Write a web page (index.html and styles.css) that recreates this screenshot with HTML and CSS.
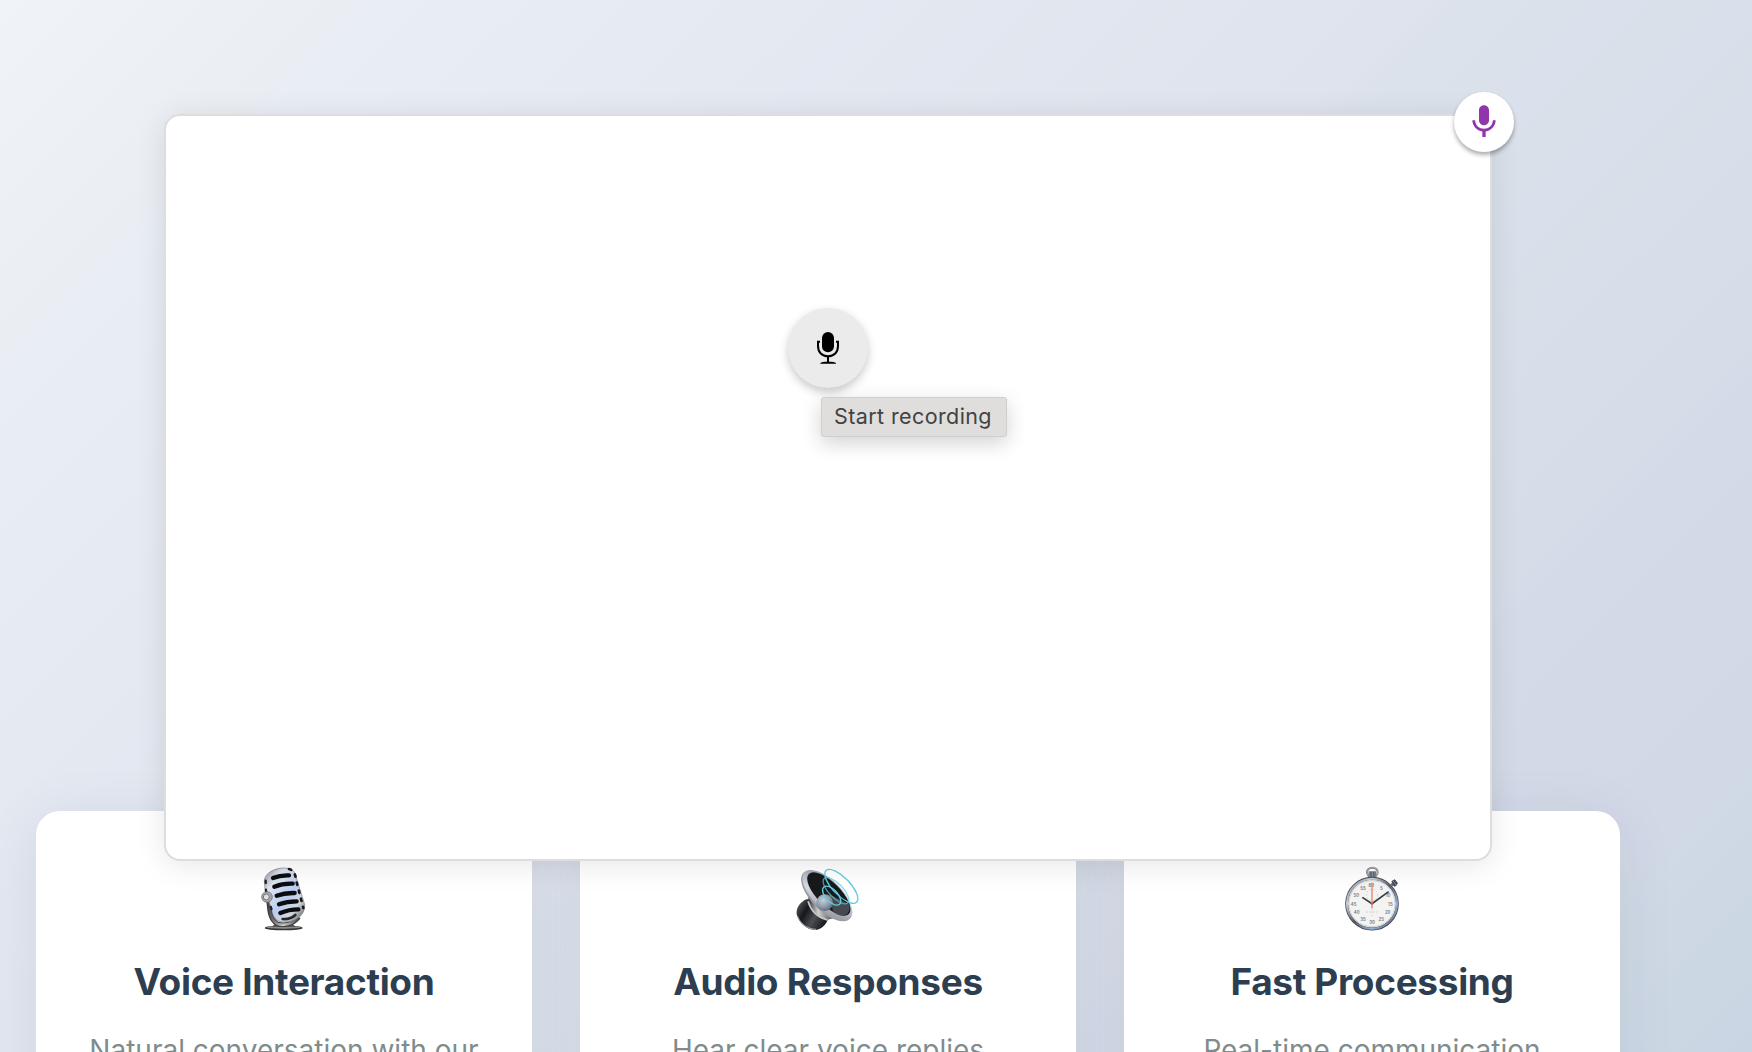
FILE: index.html
```
<!DOCTYPE html>
<html lang="en">
<head>
<meta charset="utf-8">
<title>Voice Assistant</title>
<link rel="stylesheet" href="styles.css">
</head>
<body>
<main class="features">
  <article class="card">
    <svg class="card-icon" viewBox="-3 3 270 270" aria-hidden="true">
      <defs>
        <linearGradient id="chrome" x1="0" y1="0" x2="1" y2="1">
          <stop offset="0" stop-color="#8e8e92"/><stop offset=".25" stop-color="#dfe5f0"/><stop offset=".55" stop-color="#b9cdf0"/><stop offset=".75" stop-color="#d4d8e0"/><stop offset="1" stop-color="#4e4c4c"/>
        </linearGradient>
        <linearGradient id="yoke" x1="0" y1="0" x2="1" y2="0">
          <stop offset="0" stop-color="#4a4848"/><stop offset=".5" stop-color="#c9c8ca"/><stop offset="1" stop-color="#4a4848"/>
        </linearGradient>
      </defs>
      <ellipse cx="131" cy="234" rx="57" ry="7" fill="#343634"/>
      <ellipse cx="131" cy="232" rx="52" ry="4" fill="#8b908d"/>
      <path d="M104 222h54l10 9H95z" fill="#555753"/>
      <path d="M86 148c2 34 4 60 25 73 21 8 48 2 65-20" fill="none" stroke="#3c3938" stroke-width="14"/>
      <path d="M86 148c2 34 4 60 25 73 21 8 48 2 65-20" fill="none" stroke="url(#yoke)" stroke-width="8"/>
      <path d="M73 91C76 70 101 54 133 54c23 1 35 12 37 32l24 78c2 28-21 49-55 52-23 2-39-9-42-30L75 119z" fill="url(#chrome)" stroke="#777b81" stroke-width="2"/>
      <path d="M147 57c13 3 19 14 21 32l22 85" fill="none" stroke="#17191d" stroke-width="8" stroke-linecap="round" stroke-dasharray="7 18"/>
      <path d="M77 92l1 31 18 60" fill="none" stroke="#222227" stroke-width="7" stroke-linecap="round" stroke-dasharray="7 20"/>
      <g fill="none" stroke="#0c0d10" stroke-width="13" stroke-linecap="round">
        <path d="M99 84q21-9 48-8"/><path d="M103 110q25-10 55-9"/><path d="M110 137q24-9 54-8"/><path d="M117 163q24-9 53-9"/><path d="M121 189q26-11 54-11"/>
      </g>
      <path d="M128 207q23 2 38-12" fill="none" stroke="#25272a" stroke-width="8" stroke-linecap="round"/>
      <circle cx="81" cy="141" r="16" fill="#a9aaac" stroke="#5a5b5e" stroke-width="2"/>
      <circle cx="79" cy="141" r="9" fill="#dce1e4" stroke="#74787b" stroke-width="3"/>
    </svg>
    <h2 class="card-title">Voice Interaction</h2>
    <p class="card-text">Natural conversation with our</p>
  </article>
  <article class="card">
    <svg class="card-icon" viewBox="9 3 270 270" aria-hidden="true">
      <defs>
        <linearGradient id="magnet" x1="0" y1=".2" x2="1" y2=".8">
          <stop offset="0" stop-color="#56585c"/><stop offset=".3" stop-color="#15171a"/><stop offset=".6" stop-color="#4b4e52"/><stop offset="1" stop-color="#0e0f11"/>
        </linearGradient>
        <linearGradient id="basket" x1="0" y1="0" x2="1" y2="0">
          <stop offset="0" stop-color="#252629"/><stop offset=".35" stop-color="#d0d0d0"/><stop offset="1" stop-color="#343537"/>
        </linearGradient>
        <linearGradient id="rim" x1="0" y1="0" x2="1" y2="1">
          <stop offset="0" stop-color="#8a919f"/><stop offset=".5" stop-color="#d5dbe6"/><stop offset="1" stop-color="#7f8490"/>
        </linearGradient>
        <radialGradient id="dome" cx=".4" cy=".35" r=".7">
          <stop offset="0" stop-color="#c5d0db"/><stop offset=".6" stop-color="#8e9aa8"/><stop offset="1" stop-color="#596370"/>
        </radialGradient>
      </defs>
      <path d="M82 147c-22 7-37 30-31 49 6 22 29 44 54 44 18 0 34-18 38-31z" fill="url(#magnet)"/>
      <path d="M53 199c9 23 28 38 55 39" fill="none" stroke="#a7a9ab" stroke-width="3"/>
      <path d="M87 132l-3 22c10 27 29 48 57 56l30-8z" fill="url(#basket)"/>
      <path d="M84 154c8 27 29 48 57 56" fill="none" stroke="#c6c6c6" stroke-width="5"/>
      <g transform="rotate(45 143 134)">
        <ellipse cx="143" cy="139" rx="98" ry="45" fill="#9b9da1"/>
        <ellipse cx="143" cy="135" rx="97" ry="43" fill="url(#rim)"/>
        <ellipse cx="144" cy="130" rx="85" ry="35" fill="#17191b"/>
        <path d="M144 130l66-21c24 16 21 45-20 49z" fill="#454a4e"/>
      </g>
      <circle cx="134" cy="158" r="25" fill="url(#dome)"/>
      <g fill="none" stroke="#63cbe0" stroke-width="4">
        <ellipse cx="155" cy="137" rx="35" ry="18" transform="rotate(47 155 137)"/>
        <ellipse cx="168" cy="122" rx="51" ry="21" transform="rotate(46 168 122)" opacity=".7"/>
        <ellipse cx="184" cy="109" rx="66" ry="26" transform="rotate(46 184 109)"/>
      </g>
    </svg>
    <h2 class="card-title">Audio Responses</h2>
    <p class="card-text">Hear clear voice replies</p>
  </article>
  <article class="card">
    <svg class="card-icon" viewBox="-9 3 270 270" aria-hidden="true">
      <defs>
        <linearGradient id="case" x1="0" y1="0" x2="1" y2="1">
          <stop offset="0" stop-color="#747b86"/><stop offset=".25" stop-color="#c9d0da"/><stop offset=".5" stop-color="#565a65"/><stop offset=".75" stop-color="#98b4d6"/><stop offset="1" stop-color="#3e3b40"/>
        </linearGradient>
      </defs>
      <ellipse cx="127" cy="67" rx="16" ry="14" fill="none" stroke="#74777b" stroke-width="6"/>
      <ellipse cx="127" cy="67" rx="16" ry="14" fill="none" stroke="#d2d4d6" stroke-width="2"/>
      <path d="M116 64h22v20h-22z" fill="#5d6672"/>
      <path d="M119 65v17M127 64v19M135 65v17" stroke="#a5b0bd" stroke-width="2"/>
      <path d="M185 106l8-8" stroke="#626870" stroke-width="10"/>
      <path d="M184 94l10-6 10 12-10 11z" fill="#3f474f"/>
      <path d="M188 92l13 16" stroke="#909ba4" stroke-width="3"/>
      <circle cx="126" cy="161" r="76" fill="#eeeff0" stroke="#4b4c55" stroke-width="9"/>
      <circle cx="126" cy="161" r="75" fill="none" stroke="url(#case)" stroke-width="6"/>
      <circle cx="126" cy="161" r="69" fill="#f3f3f3" stroke="#c3c7cc" stroke-width="2"/>
      <g fill="none" stroke="#bfc0c1" stroke-width="2" stroke-dasharray="5 5">
        <circle cx="126" cy="135" r="17"/><path d="M109 186h34M126 174v28"/>
      </g>
      <g class="dial-numbers">
        <text x="124" y="111">60</text><text x="154" y="119">5</text><text x="174" y="141">10</text><text x="181" y="167">15</text><text x="173" y="193">20</text><text x="154" y="214">25</text><text x="126" y="222">30</text><text x="99" y="214">35</text><text x="80" y="193">40</text><text x="71" y="167">45</text><text x="79" y="141">50</text><text x="99" y="120">55</text>
      </g>
      <path d="M97 142l29 19 50-36" fill="none" stroke="#303d40" stroke-width="5"/>
      <path d="M126 98v76" stroke="#ed8264" stroke-width="4"/>
      <circle cx="126" cy="161" r="3" fill="#b95a42"/>
    </svg>
    <h2 class="card-title">Fast Processing</h2>
    <p class="card-text">Real-time communication</p>
  </article>
</main>

<section class="panel">
  <button class="record" aria-label="Start recording">
    <svg viewBox="0 0 240 240" aria-hidden="true">
      <rect x="102" y="72" width="36" height="61" rx="18"/>
      <path d="M96 101H90V114C90 133 102 145 120 145S150 133 150 114V101H144" fill="none" stroke="#000" stroke-width="6"/>
      <path d="M117 146h6v15c10 0 18 1 21 4v2H97v-2c3-3 11-4 20-4z"/>
    </svg>
  </button>
  <div class="tooltip" role="tooltip">Start recording</div>
  <button class="badge" aria-label="Voice">
    <svg viewBox="0 0 24 24" aria-hidden="true"><path d="M12 14c1.660 0 3-1.340 3-3V5c0-1.660-1.340-3-3-3S9 3.340 9 5v6c0 1.660 1.340 3 3 3zm5.300-3c0 3-2.540 5.100-5.300 5.100S6.700 14 6.700 11H5c0 3.410 2.720 6.230 6 6.720V21h2v-3.280c3.280-.48 6-3.300 6-6.720z"/></svg>
  </button>
</section>
</body>
</html>
```
FILE: styles.css
```
* { box-sizing: border-box; }

body {
  margin: 0;
  height: 100vh;
  overflow: hidden;
  position: relative;
  font-family: Inter, "Liberation Sans", sans-serif;
  background: linear-gradient(135deg, #f0f3f8 0%, #eaeef2 12.6%, #e9edf6 13.6%, #e3e8f1 31%, #dfe3ed 50.5%, #dbe2ec 52.5%, #d7dde8 74%, #d4dbe8 76%, #d2d8e6 89%, #cfd9e5 91%, #cad5e3 100%);
}

.features {
  display: grid;
  grid-template-columns: repeat(3, 496px);
  gap: 48px;
  height: 100vh;
  overflow: hidden;
  padding: 811px 0 0 36px;
}

.card {
  height: 440px;
  padding: 40px 32px;
  display: flex;
  flex-direction: column;
  align-items: center;
  background: #fff;
  border-radius: 24px;
  box-shadow: 0 8px 60px rgba(31, 38, 80, .08);
}

.card-icon {
  width: 90px;
  height: 90px;
  flex: none;
}

.dial-numbers {
  font: 600 13px Inter, sans-serif;
  fill: #77797b;
  text-anchor: middle;
}

.card-title {
  margin: 19px 0 24px;
  font-size: 37px;
  line-height: 44px;
  font-weight: 700;
  letter-spacing: -.33px;
  color: #2c3e50;
}

.card-text {
  margin: 0;
  font-size: 28px;
  line-height: 45px;
  color: #7f8c8d;
  white-space: nowrap;
}

.panel {
  position: absolute;
  left: 164px;
  top: 114px;
  width: 1328px;
  height: 747px;
  padding-top: 192px;
  display: flex;
  justify-content: center;
  align-items: flex-start;
  background: #fff;
  border: 2px solid #ddd;
  border-radius: 16px;
  box-shadow: 0 4px 30px rgba(0, 0, 0, .1);
}

.record {
  width: 80px;
  height: 80px;
  padding: 0;
  border: 0;
  border-radius: 50%;
  background: #ebebeb;
  box-shadow: 0 4px 10px rgba(0, 0, 0, .22);
}

.record svg,
.badge svg { display: block; }

.tooltip {
  position: absolute;
  left: 655px;
  top: 281px;
  width: 186px;
  height: 40px;
  padding-left: 12px;
  border: 1px solid #cfcfce;
  border-radius: 3px;
  background: #dfdedc;
  box-shadow: 0 6px 20px rgba(0, 0, 0, .18);
  font-size: 21.500px;
  line-height: 36px;
  letter-spacing: .4px;
  color: #424241;
  white-space: nowrap;
}

.badge {
  position: absolute;
  left: 1288px;
  top: -24px;
  width: 60px;
  height: 60px;
  padding: 10px;
  border: 0;
  border-radius: 50%;
  background: #fff;
  fill: #9036aa;
  box-shadow: 0 3px 4px rgba(0, 0, 0, .32);
}
```
